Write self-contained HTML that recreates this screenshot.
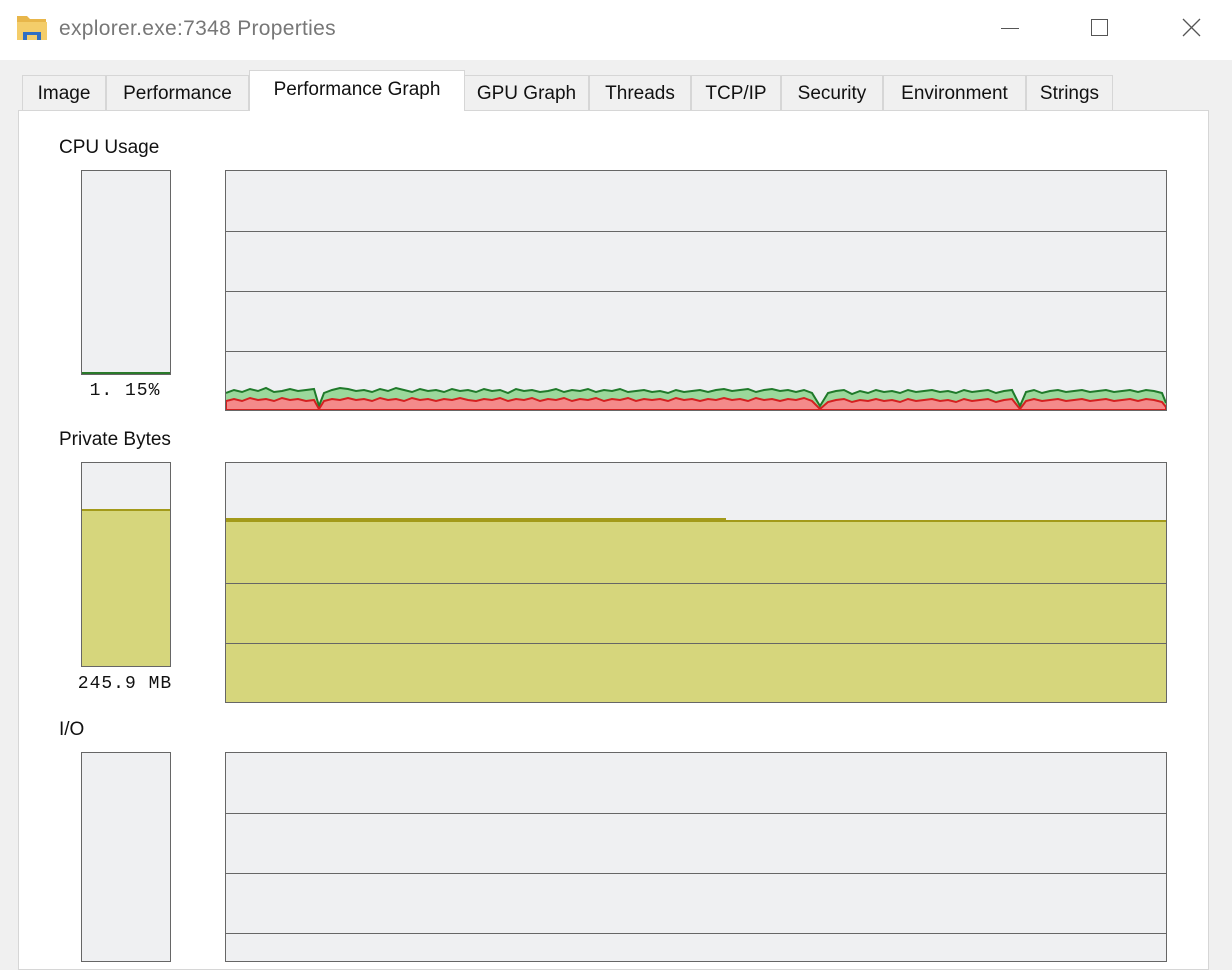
<!DOCTYPE html>
<html><head><meta charset="utf-8"><style>
body{margin:0;width:1232px;height:955px;overflow:hidden;background:#f0f0f0;font-family:"Liberation Sans","DejaVu Sans",sans-serif;position:relative}
.title{position:absolute;left:0;top:0;width:1232px;height:60px;background:#fff}
.title .t{position:absolute;left:59px;top:17px;font-size:21px;color:#777;letter-spacing:0.3px}
.tab{position:absolute;top:75px;height:35px;background:#f0f0f0;border:1px solid #d6d6d6;border-bottom:none;box-sizing:border-box;font-size:19px;color:#111;text-align:center;line-height:36px}
.tab.sel{top:70px;height:41px;background:#fff;line-height:38px;z-index:2}
.panel{position:absolute;left:18px;top:110px;width:1191px;height:860px;background:#fff;border:1px solid #d6d6d6;box-sizing:border-box}
.lbl{position:absolute;font-size:19px;color:#111}
.box{position:absolute;background:#eff0f2;border:1px solid #666;box-sizing:border-box}
.hl{position:absolute;left:0;right:0;height:1px;background:#666}
.val{position:absolute;font-family:"Liberation Mono",monospace;font-size:18px;color:#111;width:110px;text-align:center;letter-spacing:1px}
</style></head><body>
<div class="title">
<svg style="position:absolute;left:16px;top:14px" width="32" height="28" viewBox="0 0 32 28"><path d="M1 2h10l3 3h16v21H1z" fill="#e8b64a"/><path d="M1 8h30v18H1z" fill="#f4cd6a"/><path d="M7 26v-8h18v8h-4v-5h-10v5z" fill="#2f6fc4"/></svg>
<div class="t">explorer.exe:7348 Properties</div>
<div style="position:absolute;left:1001px;top:28px;width:18px;height:1px;background:#555"></div>
<div style="position:absolute;left:1091px;top:19px;width:17px;height:17px;border:1px solid #555;box-sizing:border-box"></div>
<svg style="position:absolute;left:1182px;top:18px" width="19" height="19"><path d="M1 1L18 18M18 1L1 18" stroke="#555" stroke-width="1.3"/></svg>
</div>
<div class="panel"></div>
<div class="tab" style="left:22px;width:84px">Image</div>
<div class="tab" style="left:106px;width:143px">Performance</div>
<div class="tab sel" style="left:249px;width:216px">Performance Graph</div>
<div class="tab" style="left:464px;width:125px">GPU Graph</div>
<div class="tab" style="left:589px;width:102px">Threads</div>
<div class="tab" style="left:691px;width:90px">TCP/IP</div>
<div class="tab" style="left:781px;width:102px">Security</div>
<div class="tab" style="left:883px;width:143px">Environment</div>
<div class="tab" style="left:1026px;width:87px">Strings</div>

<div class="lbl" style="left:59px;top:137px">CPU Usage</div>
<div class="box" style="left:81px;top:170px;width:90px;height:205px"><div style="position:absolute;left:0;right:0;bottom:0;height:2px;background:#2a7a2a"></div></div>
<div class="val" style="left:70px;top:381px">1. 15%</div>
<div class="box" style="left:225px;top:170px;width:942px;height:241px">
<div class="hl" style="top:60px"></div><div class="hl" style="top:120px"></div><div class="hl" style="top:180px"></div>
<svg style="position:absolute;left:0;top:0" width="940" height="239" viewBox="0 0 940 239">
<polygon fill="#9bd89b" points="0,239 0,222 8,219 16,221 24,218 32,220 40,217 48,221 56,220 64,218 72,220 80,219 88,218 93,235 98,222 106,219 114,217 122,218 130,220 138,219 146,221 154,218 162,220 170,217 178,219 186,221 194,218 202,220 210,219 218,221 226,218 234,220 242,219 250,221 258,218 266,220 274,219 282,222 290,218 298,220 306,219 314,221 322,220 330,218 338,221 346,219 354,220 362,218 370,221 378,219 386,220 394,218 402,221 410,220 418,219 426,221 434,220 442,222 450,219 458,221 466,220 474,219 482,221 490,219 498,218 506,220 514,219 522,218 530,221 538,219 546,218 554,220 562,219 570,221 578,219 586,222 594,235 602,222 610,220 618,219 626,223 634,220 642,222 650,219 658,221 666,220 674,222 682,219 690,221 698,220 706,219 714,221 722,220 730,222 738,219 746,221 754,220 762,219 770,222 778,220 786,219 794,235 800,221 808,219 816,222 824,220 832,219 840,221 848,220 856,219 864,221 872,220 880,219 888,221 896,220 904,219 912,221 920,219 928,220 936,222 940,232 940,239"/>
<polyline fill="none" stroke="#1f7a2a" stroke-width="2" points="0,222 8,219 16,221 24,218 32,220 40,217 48,221 56,220 64,218 72,220 80,219 88,218 93,235 98,222 106,219 114,217 122,218 130,220 138,219 146,221 154,218 162,220 170,217 178,219 186,221 194,218 202,220 210,219 218,221 226,218 234,220 242,219 250,221 258,218 266,220 274,219 282,222 290,218 298,220 306,219 314,221 322,220 330,218 338,221 346,219 354,220 362,218 370,221 378,219 386,220 394,218 402,221 410,220 418,219 426,221 434,220 442,222 450,219 458,221 466,220 474,219 482,221 490,219 498,218 506,220 514,219 522,218 530,221 538,219 546,218 554,220 562,219 570,221 578,219 586,222 594,235 602,222 610,220 618,219 626,223 634,220 642,222 650,219 658,221 666,220 674,222 682,219 690,221 698,220 706,219 714,221 722,220 730,222 738,219 746,221 754,220 762,219 770,222 778,220 786,219 794,235 800,221 808,219 816,222 824,220 832,219 840,221 848,220 856,219 864,221 872,220 880,219 888,221 896,220 904,219 912,221 920,219 928,220 936,222 940,232"/>
<polygon fill="#f48a8a" stroke="#d42020" stroke-width="2" points="0,239 0,230 8,228 16,230 24,227 32,229 40,228 48,230 56,227 64,229 72,228 80,230 88,229 93,238 98,230 106,228 114,229 122,227 130,229 138,228 146,230 154,227 162,229 170,228 178,230 186,227 194,229 202,228 210,230 218,228 226,229 234,227 242,229 250,230 258,228 266,229 274,227 282,230 290,228 298,229 306,227 314,230 322,228 330,229 338,227 346,230 354,228 362,229 370,227 378,230 386,228 394,229 402,227 410,230 418,228 426,229 434,228 442,230 450,227 458,229 466,228 474,230 482,228 490,229 498,227 506,229 514,228 522,230 530,227 538,229 546,228 554,230 562,228 570,229 578,227 586,230 594,238 602,231 610,229 618,228 626,231 634,229 642,230 650,228 658,230 666,229 674,231 682,228 690,230 698,229 706,228 714,230 722,229 730,231 738,228 746,230 754,229 762,228 770,231 778,229 786,228 794,238 800,230 808,228 816,230 824,229 832,228 840,230 848,229 856,228 864,230 872,229 880,228 888,230 896,229 904,228 912,230 920,228 928,229 936,231 940,236 940,239"/>
</svg>
</div>

<div class="lbl" style="left:59px;top:429px">Private Bytes</div>
<div class="box" style="left:81px;top:462px;width:90px;height:205px"><div style="position:absolute;left:0;right:0;bottom:0;top:46px;background:#d6d67c;border-top:2px solid #a39a1a"></div></div>
<div class="val" style="left:70px;top:674px">245.9 MB</div>
<div class="box" style="left:225px;top:462px;width:942px;height:241px">
<div style="position:absolute;left:0;right:0;top:57px;bottom:0;background:#d6d67c;border-top:2px solid #a39a1a"></div>
<div style="position:absolute;left:0;width:500px;top:55px;height:3px;background:#a39a1a"></div>
<div class="hl" style="top:120px"></div><div class="hl" style="top:180px"></div>
</div>

<div class="lbl" style="left:59px;top:719px">I/O</div>
<div class="box" style="left:81px;top:752px;width:90px;height:210px"></div>
<div class="box" style="left:225px;top:752px;width:942px;height:210px">
<div class="hl" style="top:60px"></div><div class="hl" style="top:120px"></div><div class="hl" style="top:180px"></div>
</div>
</body></html>
